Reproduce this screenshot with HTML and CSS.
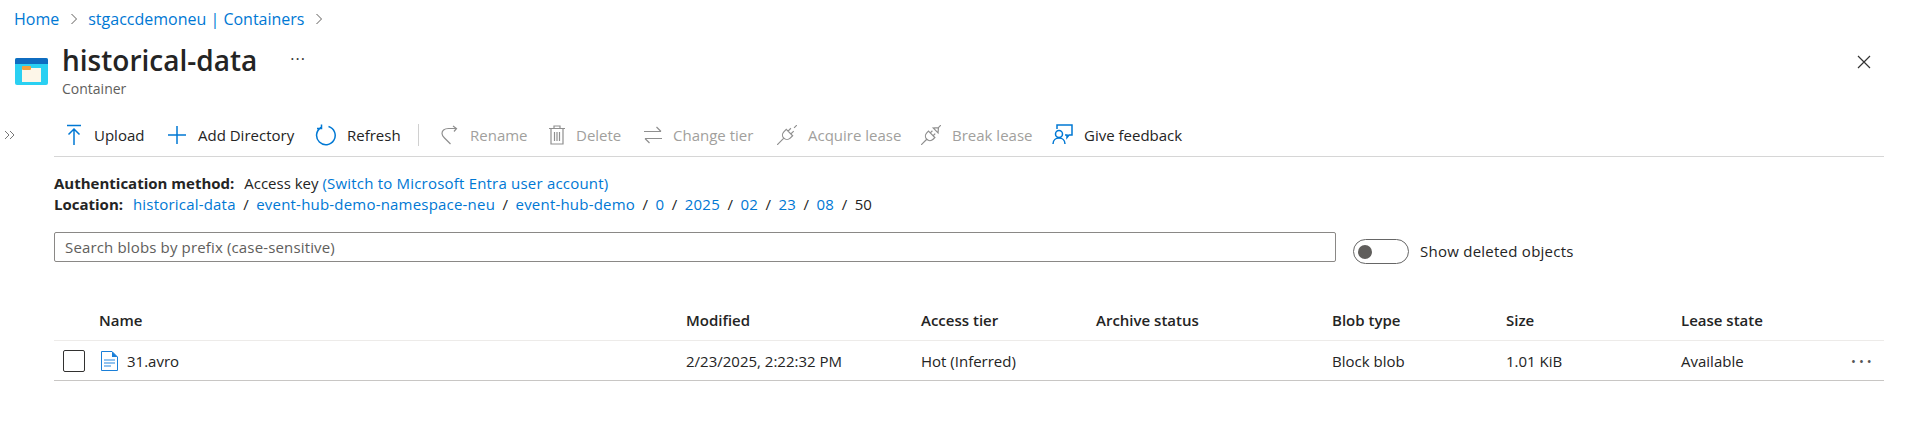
FILE: index.html
```html
<!DOCTYPE html>
<html lang="en">
<head>
  <meta charset="UTF-8" />
  <title>historical-data</title>
  <link rel="stylesheet" href="styles.css">
</head>
<body>
  <nav class="crumbs">
    <a href="#">Home</a>
    <svg class="chev" width="8" height="12" viewBox="0 0 8 12"><path d="M1.5 1l5 5-5 5"/></svg>
    <a href="#">stgaccdemoneu | Containers</a>
    <svg class="chev" width="8" height="12" viewBox="0 0 8 12"><path d="M1.5 1l5 5-5 5"/></svg>
  </nav>

  <header class="head">
    <svg class="head-icon" width="33" height="27" viewBox="0 0 33 27">
      <rect width="33" height="27" rx="2" fill="#2ad0f2"/>
      <path d="M0 2a2 2 0 0 1 2-2h29a2 2 0 0 1 2 2v4H0z" fill="#0f6cc0"/>
      <rect x="7" y="10" width="19" height="14" fill="#fdf6e8"/>
      <rect x="7" y="8" width="9" height="4" rx="1" fill="#f2a03c"/>
    </svg>
    <div class="head-text">
      <h1>historical-data</h1>
      <p>Container</p>
    </div>
    <span class="head-more">&middot;&middot;&middot;</span>
    <svg class="close" width="16" height="16" viewBox="0 0 16 16"><path d="M2 2l12 12M14 2L2 14"/></svg>
  </header>

  <div class="layout">
    <div class="rail">
      <svg width="11" height="10" viewBox="0 0 11 10"><path d="M1 1l4 4-4 4M6 1l4 4-4 4"/></svg>
    </div>
    <main class="content">
      <div class="toolbar">
        <span class="tool tool-upload">
          <svg class="ico blue" width="18" height="22" viewBox="0 0 18 22"><path d="M2 1.5h14M9 21V5M3.5 10.5L9 5l5.5 5.5"/></svg>Upload
        </span>
        <span class="tool tool-add">
          <svg class="ico blue" width="20" height="20" viewBox="0 0 20 20"><path d="M10 1v18M1 10h18"/></svg>Add Directory
        </span>
        <span class="tool tool-refresh">
          <svg class="ico blue" width="21" height="22" viewBox="0 0 21 22"><path d="M6 3.5A9.3 9.3 0 1 0 13.5 2.500M6.500 0.500V4.500H2"/></svg>Refresh
        </span>
        <span class="sep"></span>
        <span class="tool off tool-rename">
          <svg class="ico" width="18" height="20" viewBox="0 0 18 20"><path d="M15 3.5H7.5C3 3.500 1 6 1 8.500c0 2 1 3 2.500 4.500l6 6M12 1l3.500 2.500L13 6.500"/></svg>Rename
        </span>
        <span class="tool off tool-delete">
          <svg class="ico" width="16" height="20" viewBox="0 0 16 20"><path d="M0 3.5h16M5 3.500V1h6v2.500M2 3.500V19h12V3.500M5.500 7v9M8 7v9M10.500 7v9"/></svg>Delete
        </span>
        <span class="tool off tool-tier">
          <svg class="ico" width="18" height="18" viewBox="0 0 18 18"><path d="M0 5.5h17M12.500 1L17 5.500M1 12.500h17M1 12.500L5.500 17"/></svg>Change tier
        </span>
        <span class="tool off tool-acquire">
          <svg class="ico" width="20" height="20" viewBox="0 0 20 20"><g transform="rotate(45 10 10)"><path d="M5.5 6.5h9V10a4.500 4.500 0 0 1-9 0zM8 6.500V2.500M12 6.500V2.500M10 14.500V24M10 -4V0"/></g></svg>Acquire lease
        </span>
        <span class="tool off tool-break">
          <svg class="ico" width="20" height="20" viewBox="0 0 20 20"><g transform="rotate(45 10 10)"><path d="M5.5 9h9v2.500a4.500 4.500 0 0 1-9 0zM8 9V6M12 9V6M10 16V24M6.500 3.500h7L10 -.5zM10 -.5V-4"/></g></svg>Break lease
        </span>
        <span class="tool tool-feedback">
          <svg class="ico blue" width="21" height="21" viewBox="0 0 21 21"><path d="M5 5V1h15v10h-3l-2 2.500V11h-2"/><circle cx="7" cy="10" r="3.500"/><path d="M1 20c0-4 3-6 6-6s6 2 6 6"/></svg><span class="dark">Give feedback</span>
        </span>
      </div>

      <div class="info">
        <div><b>Authentication method:</b> Access key <a href="#">(Switch to Microsoft Entra user account)</a></div>
        <div class="path"><b>Location:</b> <a href="#">historical-data</a><i>/</i><a href="#">event-hub-demo-namespace-neu</a><i>/</i><a href="#">event-hub-demo</a><i>/</i><a href="#">0</a><i>/</i><a href="#">2025</a><i>/</i><a href="#">02</a><i>/</i><a href="#">23</a><i>/</i><a href="#">08</a><i>/</i><span>50</span></div>
      </div>

      <div class="filters">
        <div class="search">Search blobs by prefix (case-sensitive)</div>
        <span class="toggle"><span class="knob"></span></span>
        <span class="toggle-label">Show deleted objects</span>
      </div>

      <div class="grid grid-head">
        <span></span><span>Name</span><span>Modified</span><span>Access tier</span><span>Archive status</span><span>Blob type</span><span>Size</span><span>Lease state</span><span></span>
      </div>
      <div class="grid grid-row">
        <span class="check"></span>
        <span class="name">
          <svg width="17" height="20" viewBox="0 0 17 20">
            <path d="M.5.5h10.500l5.500 5.500v13.500H.5z" fill="#fff" stroke="#1a7fd8"/>
            <path d="M11 .5v5.500h5.500z" fill="#1a7fd8"/>
            <path d="M3 9h11M3 12h11M3 15h7" stroke="#6fb0ea" stroke-width="1.5"/>
          </svg>31.avro
        </span>
        <span>2/23/2025, 2:22:32 PM</span>
        <span>Hot (Inferred)</span>
        <span></span>
        <span>Block blob</span>
        <span>1.01 KiB</span>
        <span>Available</span>
        <span class="row-more">&bull;&bull;&bull;</span>
      </div>
    </main>
  </div>
</body>
</html>
```

FILE: styles.css
```css
body {
  margin: 0;
  font-family: 'Open Sans', sans-serif;
  font-size: 15px;
  color: #242424;
  background-color: #fff;
}

a {
  color: #0078d4;
  text-decoration: none;
}

.crumbs {
  height: 38px;
  padding-left: 14px;
  display: flex;
  align-items: center;
  gap: 10.5px;
  font-size: 16px;
}

.chev path {
  fill: none;
  stroke: #605e5c;
  stroke-width: 1;
}

.head {
  height: 75px;
  display: flex;
  align-items: flex-start;
  padding-left: 15px;
  padding-right: 35px;
}

.head-icon {
  margin-top: 20px;
  margin-right: 14px;
}

.head-text h1 {
  margin: 0;
  font-size: 28px;
  font-weight: 600;
  line-height: 44px;
}

.head-text p {
  margin: -3px 0 0;
  font-size: 14px;
  color: #605e5c;
}

.head-more {
  margin-left: 33px;
  margin-top: 10px;
  font-size: 16px;
  letter-spacing: 1px;
  color: #333;
}

.close {
  margin-left: auto;
  margin-top: 16px;
}

.close path {
  fill: none;
  stroke: #333;
  stroke-width: 1.2;
}

.layout {
  display: flex;
}

.rail {
  width: 54px;
  flex: none;
  padding: 11px 0 0 4px;
  box-sizing: border-box;
}

.rail path {
  fill: none;
  stroke: #777;
  stroke-width: 1;
}

.content {
  flex: 1;
  margin-right: 23px;
}

.toolbar {
  height: 43px;
  border-bottom: 1px solid #d6d6d6;
  display: flex;
  align-items: center;
}

.tool {
  display: flex;
  align-items: center;
  white-space: nowrap;
}

.tool.off {
  color: #a19f9d;
}

.dark {
  color: #242424;
}

.ico {
  margin-right: 11px;
  overflow: hidden;
}

.ico path, .ico circle, .ico rect {
  fill: none;
  stroke: #8f8f8f;
  stroke-width: 1.2;
}

.ico.blue path, .ico.blue circle {
  stroke: #0078d4;
  stroke-width: 1.5;
}

.tool-upload { margin-left: 11px; width: 102px; }
.tool-add { width: 148px; }
.tool-refresh { width: 103px; }
.sep { width: 1px; height: 22px; background-color: #d0d0d0; margin-right: 22px; }
.tool-rename { width: 108px; }
.tool-delete { width: 95px; }
.tool-tier { width: 133px; }
.tool-acquire { width: 144px; }
.tool-break { width: 131px; }

.info {
  margin-top: 16px;
  line-height: 21px;
}

.info b {
  font-weight: 700;
  margin-right: 6px;
}

.info a {
  letter-spacing: 0.2px;
}

.path i {
  font-style: normal;
  margin: 0 7.5px;
}

.filters {
  margin-top: 17px;
  display: flex;
  align-items: flex-start;
}

.search {
  width: 1282px;
  height: 30px;
  box-sizing: border-box;
  border: 1px solid #8a8886;
  border-radius: 2px;
  padding-left: 10px;
  line-height: 28px;
  color: #605e5c;
  letter-spacing: 0.15px;
}

.toggle {
  width: 56px;
  height: 25px;
  box-sizing: border-box;
  margin: 7px 0 0 17px;
  border: 1px solid #666;
  border-radius: 13px;
  display: flex;
  align-items: center;
  padding-left: 4px;
}

.knob {
  width: 14px;
  height: 14px;
  border-radius: 50%;
  background-color: #605e5c;
}

.toggle-label {
  margin: 9px 0 0 11px;
  letter-spacing: 0.25px;
}

.grid {
  display: grid;
  grid-template-columns: 45px 587px 235px 175px 236px 174px 175px 170px 1fr;
  align-items: center;
}

.grid-head {
  margin-top: 41px;
  height: 30px;
  padding-top: 5px;
  border-bottom: 1px solid #edebe9;
  font-weight: 600;
  align-items: start;
}

.grid-row {
  height: 39px;
  border-bottom: 1px solid #c8c6c4;
}

.check {
  width: 20px;
  height: 20px;
  margin-left: 9px;
  border: 1px solid #323130;
  border-radius: 2px;
}

.name {
  display: flex;
  align-items: center;
  gap: 9px;
  margin-left: 2px;
}

.row-more {
  font-size: 13px;
  letter-spacing: 3px;
  color: #555;
}
```
